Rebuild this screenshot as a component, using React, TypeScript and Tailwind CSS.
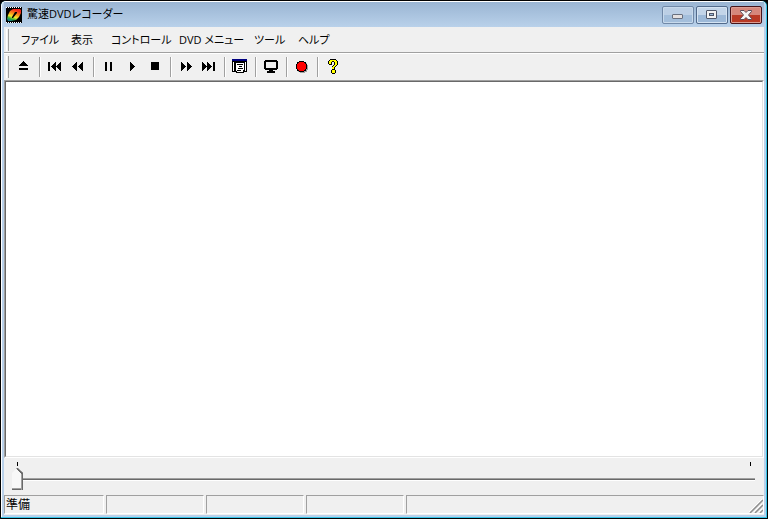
import { useState, type ReactNode } from "react";

const MENUS = [
  { label: "ファイル", width: "w-[50px]" },
  { label: "表示", width: "w-[40px]" },
  { label: "コントロール", width: "w-[68px]" },
  { label: "DVD メニュー", width: "w-[75px]" },
  { label: "ツール", width: "w-[44px]" },
  { label: "ヘルプ", width: "w-[44px]" },
];

// Triangles are built from 1px columns so that they stay crisp.
const LEFT = "v1h-1v1h-1v1h-1v1h-1v1h1v1h1v1h1v1h1v1h1v-9z";
const RIGHT = "v9h1v-1h1v-1h1v-1h1v-1h1v-1h-1v-1h-1v-1h-1v-1h-1v-1z";

type Tool = { label: string; icon: ReactNode };

const GROUPS: Tool[][] = [
  [{ label: "取り出し", icon: <path d="M7 2h1v1h1v1h1v1h1v1h1v1H3V6h1V5h1V4h1V3h1zM3 9h9v2H3z" /> }],
  [
    { label: "前へ", icon: <path d={`M1 3h2v9H1zM9 3h-1${LEFT}M14 3h-1${LEFT}`} /> },
    { label: "巻き戻し", icon: <path d={`M7 3h-1${LEFT}M13 3h-1${LEFT}`} /> },
  ],
  [
    { label: "一時停止", icon: <path d="M4 3h2v9H4zM9 3h2v9H9z" /> },
    { label: "再生", icon: <path d={`M6 3${RIGHT}`} /> },
    { label: "停止", icon: <path d="M4 3h8v8H4z" /> },
  ],
  [
    { label: "早送り", icon: <path d={`M3 3${RIGHT}M9 3${RIGHT}`} /> },
    { label: "次へ", icon: <path d={`M1 3${RIGHT}M6 3${RIGHT}M12 3h2v9h-2z`} /> },
  ],
  [
    {
      label: "メニュー",
      icon: (
        <>
          <path d="M0 1h15v12H0z" />
          <path fill="#fff" d="M1 3h13v9H1z" />
          <path fill="#000080" d="M0 0h15v2H0z" />
          <path d="M2 3h1v9H2zM3 3h10v9h-1v2H4v-2H3z" />
          <path fill="#fff" d="M4 4h8v7h-1v2H5v-1H4z" />
          <path d="M5 5h6v1H5zM7 7h3v1H7zM6 9h5v1H6zM5 11h4v1H5z" />
        </>
      ),
    },
  ],
  [
    {
      label: "全画面",
      icon: (
        <>
          <path d="M2 1h12v1h1v8h-1v1H2v-1H1V2h1zM6 11h4v1h2v2H4v-2h2z" />
          <path fill="#f0f0f0" d="M3 3h10v6H3z" />
        </>
      ),
    },
  ],
  [
    {
      label: "録画",
      icon: (
        <>
          <path fill="#a0a0a0" d="M6 3h5v1h2v2h1v5h-1v2h-2v1H6v-1H4V4h2z" />
          <path d="M5 2h5v1h2v2h1v5h-1v2h-2v1H5v-1H3v-2H2V5h1V3h2z" />
          <path fill="#f00" d="M5 3h5v1h1v1h1v5h-1v1h-1v1H5v-1H4v-1H3V5h1V4h1z" />
        </>
      ),
    },
  ],
  [
    {
      label: "ヘルプ",
      icon: (
        <>
          <path d="M5 0h6v1h1v1h1v4h-1v1h-1v1h-1v3h1v3h-1v1H7v-1H6v-3h1V7h1V6h1V3H7v3H4V5H3V2h1V1h1z" />
          <path fill="#ff0" d="M5 1h6v1h1v4h-1v1h-1v1H9v2H7V8h1V7h1V6h1V3H9V2H7v1H6v2H4V2h1zM7 11h3v3H7z" />
        </>
      ),
    },
  ],
];

function Gripper() {
  return <div className="ml-[2px] h-[22px] w-[3px] border-l border-r border-l-white border-r-[#a0a0a0]" />;
}

function AppIcon() {
  return (
    <svg width="16" height="16" viewBox="0 0 16 16" aria-hidden="true">
      <defs>
        <linearGradient id="disc" x1="0.7" y1="0" x2="0.3" y2="1">
          <stop offset="0.1" stopColor="#f0281c" />
          <stop offset="0.4" stopColor="#f78a1c" />
          <stop offset="0.65" stopColor="#f4e92a" />
          <stop offset="0.85" stopColor="#2fae3b" />
          <stop offset="1" stopColor="#167a84" />
        </linearGradient>
      </defs>
      <path d="M0 0h16v16H0z" />
      <path stroke="#fff" strokeDasharray="1 1" d="M0 .5h16M0 15.500h16" shapeRendering="crispEdges" />
      <path
        fill="url(#disc)"
        fillRule="evenodd"
        d="M7 2h7l1 1v3l-2 4-3 3-5 1H2l-1-2 1-4 2-4zM9 5L6 10v1h1l4-5V5z"
      />
    </svg>
  );
}

function TitleBar() {
  return (
    <header className="flex h-[25px] items-center bg-linear-to-b from-[#9ab5d3] to-[#b9d1ea] pl-[2px]">
      <AppIcon />
      <h1 className="ml-[5px] grow text-[11px] whitespace-nowrap">驚速DVDレコーダー</h1>
      <div className="mr-[2px] flex gap-[2px]">
        <button
          aria-label="最小化"
          className="flex h-[18px] w-8 items-center justify-center rounded-[2px] border border-[#7189a8] bg-linear-to-b from-[#bccfe5] from-50% to-[#a3bedb] to-50% inset-ring inset-ring-[#c8daec]"
        >
          <svg width="12" height="12" viewBox="0 0 12 12" aria-hidden="true">
            <rect x="0.5" y="5.5" width="10" height="4" rx="0.5" fill="#e4e0e0" stroke="#69707f" />
          </svg>
        </button>
        <button
          aria-label="最大化"
          className="flex h-[18px] w-8 items-center justify-center rounded-[2px] border border-[#526a8b] bg-linear-to-b from-[#c3d5e9] from-50% to-[#9db9d8] to-50% inset-ring inset-ring-[#d5e4f3]"
        >
          <svg width="12" height="10" viewBox="0 0 12 10" aria-hidden="true">
            <rect x="0.5" y="0.5" width="10" height="8" rx="0.5" fill="#f3f3f3" stroke="#50586a" />
            <rect x="3.5" y="3.5" width="4" height="2" fill="#9fbbda" stroke="#50586a" />
          </svg>
        </button>
        <button
          aria-label="閉じる"
          className="flex h-[18px] w-8 items-center justify-center rounded-[2px] border border-[#47141a] bg-linear-to-b from-[#d6877b] from-50% to-[#b93a25] to-50% inset-ring inset-ring-[#dc9d92]"
        >
          <svg width="12" height="10" viewBox="0 0 12 10" aria-hidden="true">
            <path
              d="M.5 .5h3.500l2 2 2-2h3.500v1L8.500 5l3 3.500v1H8l-2-2-2 2H.5v-1l3-3.500-3-3.500z"
              fill="#f4f4f4"
              stroke="#5b4a56"
            />
          </svg>
        </button>
      </div>
    </header>
  );
}

function MenuBar() {
  return (
    <nav className="flex h-[27px] items-center border-b border-white shadow-[inset_0_-1px_#a0a0a0]">
      <Gripper />
      <div className="ml-3 flex">
        {MENUS.map((m) => (
          <button key={m.label} className={`${m.width} text-left text-[11px] whitespace-nowrap`}>
            {m.label}
          </button>
        ))}
      </div>
    </nav>
  );
}

function Toolbar() {
  return (
    <div role="toolbar" className="flex h-[26px] items-center">
      <Gripper />
      <div className="ml-[3px] flex">
        {GROUPS.map((group, i) => (
          <div key={i} className="flex items-center">
            {i > 0 && (
              <div className="mr-[2px] ml-1 h-5 w-[2px] border-l border-r border-l-[#a0a0a0] border-r-white" />
            )}
            {group.map((tool) => (
              <button
                key={tool.label}
                aria-label={tool.label}
                className="flex h-[22px] w-[23px] items-center justify-start pl-1"
              >
                <svg width="16" height="16" viewBox="0 0 16 16" shapeRendering="crispEdges" aria-hidden="true">
                  {tool.icon}
                </svg>
              </button>
            ))}
          </div>
        ))}
      </div>
    </div>
  );
}

function SeekBar() {
  const [pos, setPos] = useState(0);
  return (
    <div className="h-9 pt-1 pr-[9px] pl-2">
      <div className="flex justify-between pr-1 pl-[5px]">
        <span className="h-1 w-px bg-black" />
        <span className="h-1 w-px bg-black" />
      </div>
      <input
        type="range"
        aria-label="再生位置"
        min={0}
        max={100}
        value={pos}
        onChange={(e) => setPos(Number(e.target.value))}
        className="mt-[2px] block h-[22px] w-full appearance-none bg-[linear-gradient(#a0a0a0_1px,#696969_1px,#696969_2px,#fff_2px)] bg-size-[100%_3px] bg-position-[0_10px] bg-no-repeat [&::-webkit-slider-thumb]:h-[22px] [&::-webkit-slider-thumb]:w-[11px] [&::-webkit-slider-thumb]:appearance-none [&::-webkit-slider-thumb]:bg-[linear-gradient(225deg,#696969_5px,transparent_5px),linear-gradient(270deg,#696969_1px,#a0a0a0_1px,#a0a0a0_2px,transparent_2px),linear-gradient(0deg,#696969_1px,#a0a0a0_1px,#a0a0a0_2px,#f8f8f8_2px)] [&::-webkit-slider-thumb]:[clip-path:polygon(5px_0,6px_0,100%_5px,100%_100%,0_100%,0_5px)]"
      />
    </div>
  );
}

function StatusBar() {
  const panel = "h-[19px] border border-t-[#a0a0a0] border-l-[#a0a0a0] border-r-white border-b-white";
  return (
    <footer className="flex gap-[2px] py-px">
      <div className={`${panel} flex w-[100px] items-center pl-px text-xs`}>準備</div>
      <div className={`${panel} w-[98px]`} />
      <div className={`${panel} w-[98px]`} />
      <div className={`${panel} w-[98px]`} />
      <div className={`${panel} flex grow items-end justify-end`}>
        <svg width="14" height="14" viewBox="0 0 14 14" aria-hidden="true">
          <path stroke="#fff" d="M0 13L13 0M5 13l8-8M10 13l3-3" />
          <path stroke="#8f8f8f" strokeWidth="1.500" d="M1 14L14 1M6 14l8-8M11 14l3-3" />
        </svg>
      </div>
    </footer>
  );
}

export default function App() {
  return (
    <div className="h-screen bg-black font-['Open_Sans','Noto_Sans_CJK_JP',sans-serif] text-black [font-feature-settings:'palt']">
      <div className="flex h-full flex-col rounded-t-[6px] border border-black bg-[#35c4e8] pr-px pb-px">
        <div className="flex min-h-0 grow flex-col rounded-t-[5px] border-t border-l border-white bg-[#b9d1ea] px-[2px] pb-[2px]">
          <TitleBar />
          <div className="flex min-h-0 grow flex-col bg-[#f0f0f0]">
            <MenuBar />
            <Toolbar />
            <main className="grow border border-t-[#a0a0a0] border-l-[#a0a0a0] border-r-white border-b-white">
              <div className="h-full border border-t-[#696969] border-l-[#696969] border-r-[#e3e3e3] border-b-[#e3e3e3] bg-white" />
            </main>
            <SeekBar />
            <StatusBar />
          </div>
        </div>
      </div>
    </div>
  );
}
